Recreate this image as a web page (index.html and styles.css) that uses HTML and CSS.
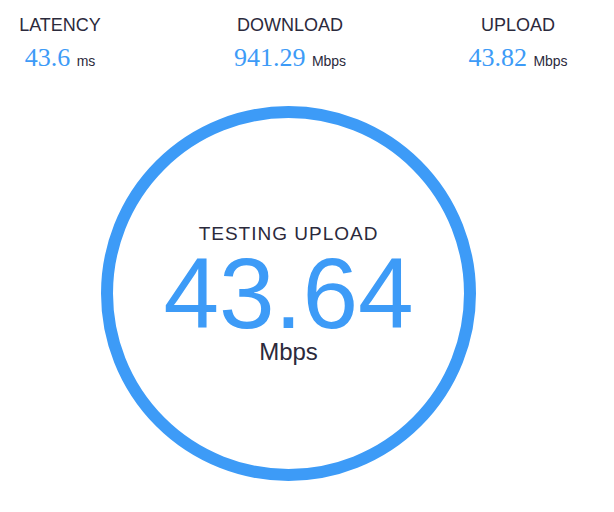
FILE: index.html
```html
<!DOCTYPE html>
<html lang="en">
<head>
    <meta charset="UTF-8">
    <meta name="viewport" content="width=device-width, initial-scale=1.0">
    <title>Speed Test</title>
    <link rel="stylesheet" href="styles.css">
</head>
<body>
    <div class="stats">
        <div class="stat">
            <div class="stat-label">LATENCY</div>
            <div class="stat-value">43.6 <span class="stat-unit">ms</span></div>
        </div>
        <div class="stat">
            <div class="stat-label">DOWNLOAD</div>
            <div class="stat-value">941.29 <span class="stat-unit">Mbps</span></div>
        </div>
        <div class="stat">
            <div class="stat-label">UPLOAD</div>
            <div class="stat-value">43.82 <span class="stat-unit">Mbps</span></div>
        </div>
    </div>
    <div class="gauge">
        <div class="gauge-status">TESTING UPLOAD</div>
        <div class="gauge-number">43.64</div>
        <div class="gauge-unit">Mbps</div>
    </div>
</body>
</html>
```

FILE: styles.css
```css
body {
    margin: 0;
    padding-top: 15px;
    background: #fff;
    color: #2b2a3c;
    font-family: "Liberation Sans", Arial, sans-serif;
}
.stats {
    display: grid;
    grid-template-columns: 120px 340px 116px;
}
.stat {
    text-align: center;
}
.stat-label {
    font-size: 18px;
    line-height: 20px;
}
.stat-value {
    margin-top: 8px;
    font-family: "Liberation Serif", "Times New Roman", serif;
    font-size: 26px;
    line-height: 30px;
    color: #3d9bf7;
}
.stat-unit {
    font-family: "Liberation Sans", Arial, sans-serif;
    font-size: 14px;
    line-height: 1;
    color: #2b2a3c;
}
.gauge {
    box-sizing: border-box;
    width: 375px;
    height: 375px;
    margin: 33px 0 0 101px;
    border: 12px solid #3d9bf7;
    border-radius: 50%;
    display: flex;
    flex-direction: column;
    align-items: center;
    justify-content: center;
}
.gauge-status {
    font-size: 19px;
    line-height: 18px;
    letter-spacing: 1px;
}
.gauge-number {
    margin-top: 2px;
    font-size: 100px;
    line-height: 96px;
    color: #3d9bf7;
}
.gauge-unit {
    margin-top: 1px;
    font-size: 24px;
    line-height: 20px;
}
```
